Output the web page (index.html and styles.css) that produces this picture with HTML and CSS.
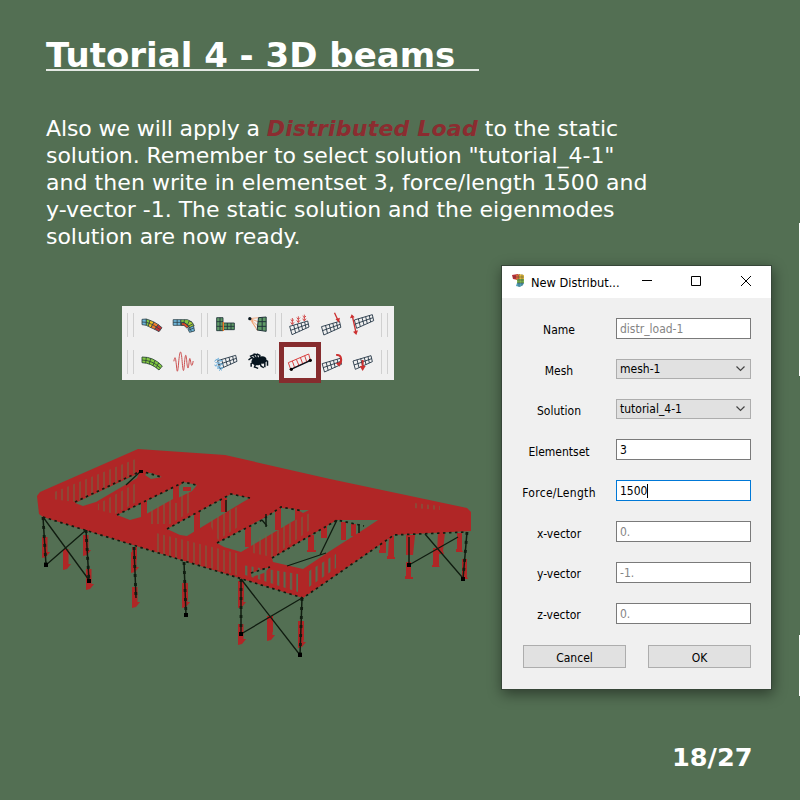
FILE: index.html
```html
<!DOCTYPE html>
<html lang="en">
<head>
<meta charset="utf-8">
<title>Tutorial 4 - 3D beams</title>
<link rel="stylesheet" href="styles.css">
</head>
<body>
<main class="slide">
  <h1 class="title">Tutorial 4 - 3D beams</h1>
  <p class="lead"><span class="tight">Also we will apply a </span><em>Distributed Load</em> <span class="wide">to the static</span><br><span class="snug">solution. Remember to select solution "tutorial_4-1"</span><br><span class="wide">and then write in elementset 3, force/length 1500 and</span><br>y-vector -1. The static solution and the eigenmodes<br><span class="snug">solution are now ready.</span></p>
  <div class="content">
    <div class="figures">
      <div class="toolbar">
        <div class="tool-row">
          <i class="sep"></i>
          <svg class="tool" viewBox="48 18 94.5 111"><g stroke="#2c4048" stroke-width="2.4"><path fill="#6cb4d8" d="M66 58L79 57L79 76L66 74Z"/><path fill="#84c840" d="M79 57L90 61L85 79L79 76Z"/><path fill="#f0c020" d="M90 61L102 66L93 83L85 79Z"/><path fill="#ee7a28" d="M102 66L115 74L104 88L93 83Z"/><path fill="#c83030" d="M115 74L126 83L117 95L104 88Z"/><path fill="none" d="M66 66L80 67L98 74L121 89"/></g></svg>
          <svg class="tool" viewBox="142.5 18 94.5 111"><g stroke="#2c4048" stroke-width="2.4"><path fill="#6cb4d8" d="M158 59L181 59L181 76L158 76Z"/><path fill="#84c840" d="M181 59L201 59L214 66L204 80L192 76L181 76Z"/><path fill="#e04a28" d="M183 68L192 68L206 79L199 84L190 76L183 76Z"/><path fill="#a8cc38" d="M206 63L214 66L221 77L207 84L201 75Z"/><path fill="#6cb4d8" d="M219 77L222 93L207 97L202 86Z"/><path fill="none" d="M158 67L190 67L204 77L213 95M170 59V76M192 59L190 70M204 78L218 71M205 90L220 84"/></g></svg>
          <i class="sep"></i>
          <svg class="tool" viewBox="270 18 94.5 111"><g fill="#5f9a66" stroke="#20343a" stroke-width="2.6"><path d="M290 53H309V92H290ZM311 69H343V89H311Z"/><path d="M300 53V92M290 65H309M290 79H309M322 69V89M333 69V89M311 79H343"/></g><path d="M310 66V93" stroke="#f07a28" stroke-width="4"/></svg>
          <svg class="tool" viewBox="364.5 18 94.5 111"><path d="M388 56L414 53M388 56L413 65M388 56L412 78M388 56L411 92M396 60V68L406 82" stroke="#f0a070" stroke-width="2.5" fill="none"/><path d="M414 53L437 51V94L410 90Z" fill="#5f9a66" stroke="#20343a" stroke-width="3"/><path d="M425 52V92M413 65H437M412 79H437" stroke="#20343a" stroke-width="3"/><circle cx="388" cy="56" r="5" fill="#0a1820"/></svg>
          <i class="sep"></i>
          <svg class="tool" viewBox="84 18 94.5 111"><use href="#grid" x="99" y="63"/><path d="M109 54V72M127 49V66M145 44V61M104 67L109 74L114 67M122 61L127 68L132 61M140 56L145 63L150 56M104 59L109 63L114 59M122 53L127 58L132 53M140 48L145 53L150 48" class="load thin"/></svg>
          <svg class="tool" viewBox="178.5 18 94.5 111"><use href="#grid" x="193" y="64"/><path d="M234 38L244 60" class="load"/><path d="M237 58L250 53L248 68Z" fill="#cc3030"/></svg>
          <svg class="tool" viewBox="273 18 94.5 111"><use href="#grid" x="293" y="44"/><path d="M289 48L300 98" class="load"/><path d="M282 55L287 43L296 52ZM291 95L306 91L301 105Z" fill="#cc3030"/></svg>
          <i class="sep"></i>
        </div>
        <div class="tool-row">
          <i class="sep"></i>
          <svg class="tool" viewBox="48 129 94.5 111"><g fill="#84c840" stroke="#2c4838" stroke-width="2.6"><path d="M66 171Q100 170 127 198L117 210Q94 189 66 188Z"/><path d="M66 180Q98 181 121 204M79 171L77 189M92 175L88 192M105 181L99 197M116 188L109 203" fill="none"/></g></svg>
          <svg class="tool" viewBox="142.5 129 94.5 111"><path d="M160 184C164 164 165 172 168 198C170 222 172 220 175 181C179 145 182 149 185 185C188 221 190 219 192 188C195 156 197 161 199 187C202 214 204 206 206 184C208 168 209 177 211 188C213 202 216 197 218 183" fill="none" stroke="#cc5050" stroke-width="3"/></svg>
          <i class="sep"></i>
          <svg class="tool" viewBox="270 129 94.5 111"><use href="#grid" x="291" y="166"/><path d="M287 178L308 182M286 187L309 193M283 195L308 204M292 202L306 211M297 174L283 184M303 182L285 199M306 192L292 207M310 202L297 212" stroke="#78b4dc" stroke-width="3"/></svg>
          <svg class="tool" viewBox="364.5 129 94.5 111"><ellipse cx="409" cy="184" rx="16" ry="12" fill="#06141e"/><ellipse cx="425" cy="180" rx="13" ry="11" fill="#06141e"/><path d="M404 179L394 172L384 180M407 177L399 165L388 169M411 176L408 164L399 162M416 177L418 166L409 162M400 186L392 191V200M406 190L402 201L413 205M418 188L422 199L430 203M427 184L433 190V202M430 179L441 184V197" fill="none" stroke="#06141e" stroke-width="4.500"/></svg>
          <i class="sep"></i>
          <div class="tool picked"><svg class="tool" viewBox="84 129 94.5 111"><path d="M97 188L158 162L163 180L104 208ZM109 183L116 203M121 178L129 197M133 172L140 191M146 167L152 185" fill="none" stroke="#d84040" stroke-width="3"/><path d="M105 208L164 181" stroke="#06141e" stroke-width="4"/><circle cx="106" cy="208" r="5"/><circle cx="163" cy="181" r="5"/></svg></div>
          <svg class="tool" viewBox="178.5 129 94.5 111"><use href="#grid" x="195" y="175"/><path d="M239 165Q253 163 254 178Q255 190 246 194" class="load thick"/><path d="M238 190L252 185L249 200Z" fill="#cc3030"/></svg>
          <svg class="tool" viewBox="273 129 94.5 111"><use href="#grid" x="289" y="167"/><path d="M320 180V201" class="load thick"/><path d="M311 198H329L320 213Z" fill="#cc3030"/></svg>
          <i class="sep"></i>
        </div>
      </div>
      <svg class="model" viewBox="30 440 450 225">
        <defs>
          <g id="grid" fill="none" stroke="#1d3040" stroke-width="2.6"><path d="M2 16L56 0L60 18L9 41ZM5 28L58 9M14 12L20 36M25 9L31 31M36 6L41 27M47 3L51 22"/></g>
          <pattern id="slits" width="6" height="60" patternUnits="userSpaceOnUse"><path d="M2 0V60" stroke="#6c6a45" stroke-width="1"/></pattern>
          <pattern id="gaps" width="6.4" height="60" patternUnits="userSpaceOnUse"><path d="M3 0V60" stroke="#536f53" stroke-width="2"/></pattern>
          <path id="arrow" d="M-3 0H2.500V15H5L1 20L-3 21Z"/>
        </defs>
        <path class="red" d="M37 496L40 492L138 449L225 455L330 479L467 508L471 512V531L394 535L303 598L43 517L39 514Z"/>
        <g class="sky">
          <path d="M75 503L139 473L137 478L96 502L83 506ZM147 473L151 473L162 477L151 479L145 475Z"/>
          <path d="M117 515L173 488V499L141 517L130 520ZM178 487L184 482L197 485L192 491L178 498Z"/>
          <path d="M167 529L231 494L250 498L243 502L187 536L180 535Z"/>
          <path d="M217 543L262 519L281 508L295 509V520L241 552L224 547Z"/>
          <path d="M298 510H309L303 513Z"/>
          <path d="M272 558L337 520L378 520L366 528L330 551L303 569L273 562Z"/>
          <path d="M251 573L270 567L264 573L252 577Z"/>
        </g>
        <g fill="url(#slits)">
          <path d="M52 493L138 458V472L75 502L52 499Z"/>
          <path d="M98 504L138 482V501L115 514L98 510Z"/>
          <path d="M151 509L190 490V512L170 524H151Z"/>
          <path d="M208 521L241 505V525L218 540Z"/>
          <path d="M253 541L310 513V530L272 557L253 553Z"/>
          <path d="M156 533L240 554V576L156 553Z"/>
          <path d="M414 503L440 506V510L414 508Z"/>
        </g>
        <path fill="url(#gaps)" d="M242 565L298 574V592L242 574ZM306 573L336 554V568L306 589Z"/>
        <g class="red">
          <path d="M141 498H147V523H141ZM173 486H179V503H173ZM183 487H191V491H183ZM194 511H200V532H194ZM221 498H227V512H221ZM245 522H251V547H245ZM275 508H281V530H275ZM308 535H314V550H316V552H307V550H308ZM321 525H327V538H321ZM341 522H346V540H341ZM351 524H356V536H351Z"/>
          <use href="#arrow" x="45" y="537"/><use href="#arrow" x="66" y="549"/><use href="#arrow" x="86" y="535"/><use href="#arrow" x="89" y="569"/>
          <use href="#arrow" x="134" y="552"/><use href="#arrow" x="135" y="587"/><use href="#arrow" x="185" y="587"/><use href="#arrow" x="241" y="587"/><use href="#arrow" x="241" y="624"/><use href="#arrow" x="270" y="620"/><use href="#arrow" x="301" y="627"/>
          <path d="M132 547H137V560H132ZM182 583H188V600H182ZM238 581H244V600H238ZM298 621H304V640H298ZM267 616H273V632H267Z"/>
          <path d="M406 535H415L413 555H406ZM406 562H411V577H413V579H405V576H406ZM389 536H394V557H395V559H387V556H388ZM380 541H386V553H379V550H380ZM438 532H445L443 551L444 554H437ZM433 548H439V566L440 567H432V565H433ZM457 533H462V550L463 552H456V549H457ZM462 559H467V577L468 579H461V576H462Z"/>
        </g>
        <path class="edge" d="M43 517L303 598L394 535L467 532M75 502L141 471L161 477M117 515L184 482L196 485M167 529L231 494L250 498M217 543L262 520L281 507L303 511M272 558L337 520L364 526M251 573L270 567"/>
        <g class="beam">
          <path d="M43 517L89 580M85 531L46 565M141 471L126 485M241 579L300 655M241 634L302 598M337 520L320 555M326 553L287 566M409 565L458 537M425 534L462 577M262 520L267 526"/>
          <path class="post" d="M43 517L46 565M86 530L89 581M134 547L136 598M184 562L186 615M241 579V634M302 598L300 655M409 537V565M467 532L463 579M266 514V527M359 524V533M226 500V512"/>
          <path class="joint" d="M43 517L46 565M86 530L89 581M134 547L136 598M184 562L186 615M241 579V634M302 598L300 655M467 532L463 579"/>
        </g>
        <path d="M44 563h4v4h-4zM87 579h4v4h-4zM184 613h4v4h-4zM239 632h4v4h-4zM298 653h4v4h-4zM407 563h4v4h-4zM461 577h4v4h-4zM139 470h4v3h-4z"/>
      </svg>
    </div>
    <section class="dialog">
      <header class="bar">
        <svg class="app" viewBox="0 0 13 14"><path d="M0 1L6 0V6L1 5Z" fill="#b83038"/><path d="M4 1L8 0V6L4 6Z" fill="#dc6838"/><path d="M7 0L12 1V6L7 6Z" fill="#e0b83c"/><path d="M5 5L12 5V9H5Z" fill="#80b850"/><path d="M5 9H12L11 11L8 13L4 12Z" fill="#50a0b8"/><path d="M1 3H12M5 6H12M5 9H12M7 0V13M10 0V12" stroke="#303838" stroke-width=".4"/></svg>
        <span class="caption">New Distribut...</span>
        <svg class="controls" viewBox="0 0 110 12"><path d="M0 5.500H10M49.500 1.500H58.500V10.500H49.500ZM99 1L109 11M109 1L99 11" fill="none" stroke="#000" stroke-width="1"/></svg>
      </header>
      <div class="form">
        <label>Name</label><div class="field hint">distr_load-1</div>
        <label>Mesh</label><div class="field select">mesh-1<svg viewBox="0 0 9 6"><path d="M.5 .5L4.500 4.500L8.500 .5"/></svg></div>
        <label>Solution</label><div class="field select">tutorial_4-1<svg viewBox="0 0 9 6"><path d="M.5 .5L4.500 4.500L8.500 .5"/></svg></div>
        <label class="low-label">Elementset</label><div class="field">3</div>
        <label class="low-label spaced">Force/Length</label><div class="field focus">1500<i class="caret"></i></div>
        <label class="low-label">x-vector</label><div class="field hint">0.</div>
        <label>y-vector</label><div class="field hint">-1.</div>
        <label>z-vector</label><div class="field hint">0.</div>
      </div>
      <div class="actions"><div class="btn">Cancel</div><div class="btn ok">OK</div></div>
    </section>
  </div>
  <footer class="page">18/27</footer>
  <i class="sliver top"></i><i class="sliver low"></i>
</main>
</body>
</html>
```
FILE: styles.css
```css
* { box-sizing: border-box; }
body { margin: 0; background: #536f53; }
.slide {
  position: relative;
  width: 800px;
  height: 800px;
  overflow: hidden;
  background: #536f53;
  color: #fff;
  font-family: "DejaVu Sans", sans-serif;
}
.title {
  width: 433px;
  height: 36px;
  margin: 35px 0 0 46px;
  border-bottom: 2px solid #e4e9e4;
  font-size: 34px;
  line-height: 40px;
  white-space: nowrap;
}
.lead {
  height: 135px;
  margin: 44px 0 0 46px;
  font-size: 22px;
  line-height: 27px;
  white-space: nowrap;
}
.lead em { color: #8b2c30; font-weight: bold; letter-spacing: .2px; }
.tight { letter-spacing: -.1px; }
.snug { letter-spacing: -.05px; }
.wide { letter-spacing: .06px; }
.content { display: flex; height: 424px; margin-top: 15px; }
.figures { width: 501px; }
.toolbar {
  width: 272px;
  height: 74px;
  margin: 41px 0 0 122px;
  background: #f0f0f0;
}
.tool-row { display: flex; height: 37px; padding-left: 5px; align-items: center; }
.sep {
  flex: none;
  width: 7px;
  height: 24px;
  margin: 0 2px;
  border: solid #d0d0d0;
  border-width: 0 1px;
}
.tool-row .sep:first-child { margin-left: 0; }
.tool { flex: none; display: block; width: 31.5px; height: 37px; }
.load { fill: none; stroke: #cc3030; stroke-width: 4; }
.thin { stroke-width: 2.5; }
.thick { stroke-width: 6; }
.picked { position: relative; z-index: 1; }
.picked::after {
  content: "";
  box-sizing: border-box;
  position: absolute;
  left: -5px;
  top: -1px;
  width: 42px;
  height: 41px;
  border: 5px solid #862c2e;
}
.model { display: block; width: 450px; height: 225px; margin: 60px 0 0 30px; }
.red { fill: #b02626; }
.sky { fill: #536f53; }
.edge { fill: none; stroke: #101c10; stroke-width: 1.7; stroke-dasharray: 2.5 3.5; }
.beam { fill: none; stroke: #101c10; stroke-width: 1.3; }
.post { stroke-width: 1.5; }
.joint { stroke-width: 2.8; stroke-dasharray: 3 6; }
.dialog {
  width: 271px;
  height: 425px;
  border: 1px solid #364638;
  background: #f0f0f0;
  box-shadow: 1px 4px 13px rgba(0, 0, 0, .45);
  color: #000;
  font: 12px/16px "DejaVu Sans Condensed", "DejaVu Sans", sans-serif;
}
.bar { display: flex; height: 32px; padding: 0 0 0 10px; background: #fff; }
.app { width: 13px; height: 14px; margin-top: 8px; }
.caption { width: 111px; margin: 9px 0 0 6px; white-space: nowrap; font-size: 12.7px; }
.controls { width: 110px; height: 12px; margin-top: 9px; }
.form {
  display: grid;
  grid-template-columns: 114px 135px;
  grid-template-rows: 41px 40px 40px 41px 41px 41px 41px 42px;
  padding-top: 20px;
}
.form label { padding-top: 4px; text-align: center; }
.form .low-label { padding-top: 5px; }
.spaced { letter-spacing: .3px; }
.field {
  display: flex;
  align-items: center;
  height: 21px;
  padding: 0 3px;
  border: 1px solid #7a7a7a;
  background: #fff;
}
.hint { color: #858585; }
.select { height: 20px; background: #e1e1e1; border-color: #adadad; justify-content: space-between; }
.select svg { width: 9px; height: 6px; margin-right: 2px; fill: none; stroke: #444; stroke-width: 1.2; }
.focus { border-color: #0078d7; }
.caret { width: 1px; height: 14px; background: #000; }
.actions { display: flex; gap: 22px; padding-left: 21px; }
.btn {
  width: 103px;
  height: 23px;
  border: 1px solid #adadad;
  background: #e1e1e1;
  text-align: center;
  line-height: 24px;
}
.page { margin: 52px 0 0 672px; font-size: 25.6px; font-weight: bold; line-height: 32px; }
.sliver { position: absolute; right: 0; width: 1px; background: #fff; }
.top { top: 223px; height: 153px; }
.low { top: 635px; height: 61px; }
```
